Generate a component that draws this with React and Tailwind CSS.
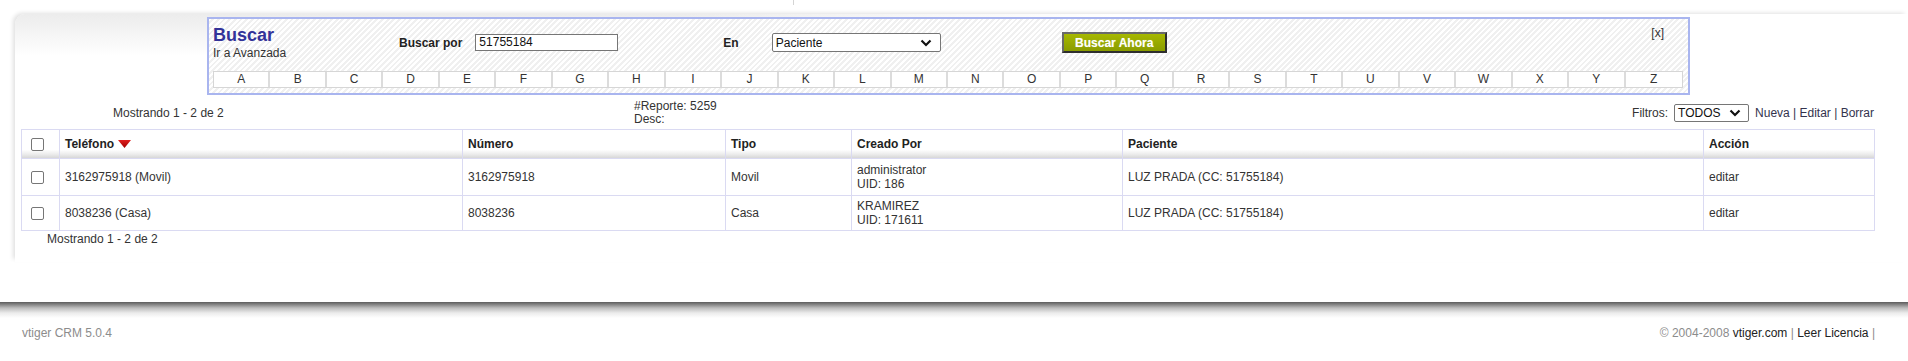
import React from "react";

const letters = "ABCDEFGHIJKLMNOPQRSTUVWXYZ".split("");

const rows = [
  {
    telefono: "3162975918 (Movil)",
    numero: "3162975918",
    tipo: "Movil",
    creado: "administrator",
    uid: "UID: 186",
    paciente: "LUZ PRADA (CC: 51755184)",
    h: "h-[37px]",
  },
  {
    telefono: "8038236 (Casa)",
    numero: "8038236",
    tipo: "Casa",
    creado: "KRAMIREZ",
    uid: "UID: 171611",
    paciente: "LUZ PRADA (CC: 51755184)",
    h: "h-[35px]",
  },
];

const Chevron = () => (
  <svg width="12" height="8" viewBox="0 0 12 8" className="shrink-0">
    <path d="M1.5 1.5 L6 6 L10.5 1.5" fill="none" stroke="#111" strokeWidth="2.2" />
  </svg>
);

const Check = () => (
  <span className="block w-[13px] h-[13px] border border-[#767676] rounded-[2px] bg-white" />
);

const SearchBox = () => (
  <div className="ml-[192px] w-[1483px] h-[78px] border-2 border-[#a9b5ef] bg-[repeating-linear-gradient(135deg,#ffffff_0px,#ffffff_2px,#f0f0f0_2px,#f0f0f0_4px)] flex flex-col">
    <div className="flex h-[52px]">
      <div className="w-[190px] pl-[4px] pt-[6px] flex flex-col">
        <span className="text-[18px] leading-[21px] font-bold text-[#333399]">Buscar</span>
        <span className="text-[12px] leading-[14px] text-[#333]">Ir a Avanzada</span>
      </div>
      <div className="mt-[13px] h-[21px] flex items-center">
        <span className="text-[12px] font-bold text-[#222]">Buscar por</span>
        <div className="ml-[13px] w-[143px] h-[17px] border border-[#767676] bg-white text-[12px] leading-[15px] pl-[3px] text-[#111]">
          51755184
        </div>
        <span className="ml-[105px] text-[12px] font-bold text-[#222]">En</span>
        <div className="ml-[33px] w-[169px] h-[19px] border border-[#767676] rounded-[2px] bg-white text-[12px] pl-[3px] pr-[8px] flex items-center justify-between text-[#111]">
          <span>Paciente</span>
          <Chevron />
        </div>
        <div className="ml-[121px] w-[105px] h-[21px] border-2 border-t-[#6a6a6a] border-l-[#6a6a6a] border-r-[#2e2e2e] border-b-[#2e2e2e] bg-[linear-gradient(to_bottom,#a6b800,#8a9c00)] text-white text-[12px] font-bold flex items-center justify-center [text-shadow:0_0_1px_rgba(255,255,255,0.4)]">
          Buscar Ahora
        </div>
      </div>
      <span className="ml-auto mr-[24px] mt-[7px] text-[12px] leading-[14px] text-[#333]">[x]</span>
    </div>
    <div className="ml-[4px] mr-[5px] mt-[0px] grid grid-cols-[repeat(26,minmax(0,1fr))] h-[17px] border border-[#d6d6d6] bg-white">
      {letters.map((l, i) => (
        <div
          key={l}
          className={`text-[12px] leading-[15px] text-center text-[#333] ${i < 25 ? "border-r-2 border-[#dcdcdc]" : ""}`}
        >
          {l}
        </div>
      ))}
    </div>
  </div>
);

const th = "border border-[#dadaf2] text-left font-bold text-[#222] px-[5px] align-middle";
const td = "border border-[#dadaf2] text-left text-[#333] px-[5px] align-middle";

const App = () => {
  return (
    <div className="w-[1908px] h-[361px] bg-white font-['Liberation_Sans',Arial,sans-serif] text-[12px] overflow-hidden">
      <div className="h-[14px]">
        <div className="ml-[793px] w-px h-[5px] bg-[#d4d4d4]" />
      </div>

      <div className="ml-[15px] h-[248px] rounded-tl-[10px] pt-[3px] pl-[6px] shadow-[-3px_-2px_4px_-1px_rgba(0,0,0,0.12)] bg-[linear-gradient(to_right,rgba(255,255,255,0)_35%,#fff_58%),linear-gradient(to_bottom,#ececec,#ffffff_42px)]">
        <div className="-ml-[6px]">
          <SearchBox />
        </div>

        <div className="mt-[5px] w-[1853px] h-[26px] flex items-center text-[#333]">
          <div className="w-[613px] pl-[92px]">Mostrando 1 - 2 de 2</div>
          <div className="flex flex-col leading-[13px]">
            <span>#Reporte: 5259</span>
            <span>Desc:</span>
          </div>
          <div className="ml-auto flex items-center">
            <span>Filtros:</span>
            <div className="ml-[6px] w-[75px] h-[18px] border border-[#767676] rounded-[2px] bg-white pl-[3px] pr-[7px] flex items-center justify-between text-[#111]">
              <span>TODOS</span>
              <Chevron />
            </div>
            <span className="ml-[6px] text-[#33334d]">Nueva | Editar | Borrar</span>
          </div>
        </div>

        <table className="mt-[3px] w-[1853px] border-collapse table-fixed text-[12px]">
          <colgroup>
            <col className="w-[38px]" />
            <col className="w-[403px]" />
            <col className="w-[263px]" />
            <col className="w-[126px]" />
            <col className="w-[271px]" />
            <col className="w-[581px]" />
            <col className="w-[171px]" />
          </colgroup>
          <thead>
            <tr className="h-[29px] bg-[linear-gradient(to_bottom,#ffffff_68%,#ebebeb_84%,#d2d2d2)]">
              <th className={th + " pl-[9px]"}>
                <Check />
              </th>
              <th className={th}>
                <span className="inline-flex items-center gap-[4px]">
                  Teléfono
                  <svg width="13" height="8" viewBox="0 0 13 8">
                    <defs>
                      <linearGradient id="tri" x1="0" y1="0" x2="0" y2="1">
                        <stop offset="0" stopColor="#e02020" />
                        <stop offset="1" stopColor="#a00000" />
                      </linearGradient>
                    </defs>
                    <path d="M0 0 L13 0 L6.5 8 Z" fill="url(#tri)" />
                  </svg>
                </span>
              </th>
              <th className={th}>Número</th>
              <th className={th}>Tipo</th>
              <th className={th}>Creado Por</th>
              <th className={th}>Paciente</th>
              <th className={th}>Acción</th>
            </tr>
          </thead>
          <tbody>
            {rows.map((r) => (
              <tr key={r.numero} className={r.h}>
                <td className={td + " pl-[9px]"}>
                  <Check />
                </td>
                <td className={td}>{r.telefono}</td>
                <td className={td}>{r.numero}</td>
                <td className={td}>{r.tipo}</td>
                <td className={td + " leading-[14px]"}>
                  {r.creado}
                  <br />
                  {r.uid}
                </td>
                <td className={td}>{r.paciente}</td>
                <td className={td}>editar</td>
              </tr>
            ))}
          </tbody>
        </table>

        <div className="mt-[2px] pl-[26px] h-[13px] leading-[13px] text-[#333]">Mostrando 1 - 2 de 2</div>
      </div>

      <div className="mt-[40px] h-[16px] bg-[linear-gradient(to_bottom,#5c5c5c_0px,#7c7c7c_2px,#bdbdbd_6px,#ececec_11px,#ffffff_16px)]" />

      <div className="mt-[8px] h-[14px] pl-[22px] w-[1875px] flex items-center justify-between leading-[14px]">
        <span className="text-[#8c8c8c]">vtiger CRM 5.0.4</span>
        <span>
          <span className="text-[#8c8c8c]">© 2004-2008 </span>
          <span className="text-[#222]">vtiger.com</span>
          <span className="text-[#8c8c8c]"> | </span>
          <span className="text-[#222]">Leer Licencia</span>
          <span className="text-[#8c8c8c]"> |</span>
        </span>
      </div>
    </div>
  );
};

export default App;
